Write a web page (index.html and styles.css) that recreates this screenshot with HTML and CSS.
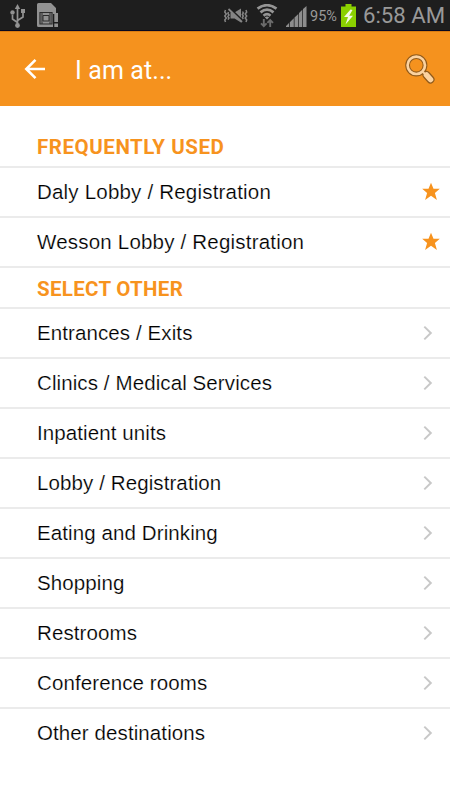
FILE: index.html
```html
<!DOCTYPE html>
<html lang="en">
<head>
<meta charset="utf-8">
<title>I am at...</title>
<link rel="stylesheet" href="styles.css">
</head>
<body>
<svg width="0" height="0" class="defs">
  <symbol id="star" viewBox="0 0 20 20"><path d="M10 .8l2.500 6h6.300l-4.900 4.100 2 7L10 13.800l-5.900 4.100 2-7L1.200 6.800h6.300z" fill="#f7931e"/></symbol>
  <symbol id="chevron" viewBox="0 0 10 16"><path d="M1.300 1.600 7.800 8l-6.500 6.400" fill="none" stroke="#c8c8c8" stroke-width="2"/></symbol>
</svg>
<div class="status">
  <svg class="usb" width="16" height="26" viewBox="0 0 16 26" fill="none" stroke="#929292" stroke-width="1.700">
    <path d="M7.500 4v19M7.500 19.500 2.500 16v-4M7.500 17.500 13 14v-4"/>
    <path d="M7.500 1 10.200 6H4.800z" fill="#929292" stroke="none"/>
    <circle cx="2.500" cy="9.500" r="2.200" fill="#929292" stroke="none"/>
    <path d="M11 6h4v4h-4z" fill="#929292" stroke="none"/>
    <circle cx="7.500" cy="22.500" r="2.400" fill="#929292" stroke="none"/>
  </svg>
  <svg class="sim" width="22" height="26" viewBox="0 0 22 26">
    <path d="M1.500 1H14l5 5v6h-3v13H1.500Q0 25 0 23.500v-21Q0 1 1.500 1z" fill="#929292"/>
    <path d="M3 10.500h12v11.500H3z" fill="none" stroke="#2c2c2c" stroke-width="1.200"/>
    <path d="M6 13.500h6v5.500H6zM5 11v11M13 11v11" fill="none" stroke="#2c2c2c" stroke-width="1"/>
    <path d="M17.300 11h3.700v9h-3.700zM17.300 21.500h3.700V25h-3.700z" fill="#929292"/>
  </svg>
  <span class="spacer"></span>
  <svg class="mute" width="24" height="18" viewBox="0 0 24 18" fill="none" stroke="#858585" stroke-width="1.500">
    <path d="M6.500 5.500h4L17 1.500v14l-6.500-4h-4z" fill="#858585" stroke="none"/>
    <path d="M6 2 19 14.500" stroke="#1e1e1e" stroke-width="2.500"/><path d="M4.500 2 18 15" stroke-width="1.800"/>
    <path d="M1.500 3 .8 5l1.500 2L.8 9l1.500 2-1.500 2 .7 2M4.500 5l-.6 1.500L5 8l-1.100 1.500L5 11l-1 1.700M18.500 4.500l.8 1.500-1 1.500 1 1.500-1 1.500 1 1.500M22 3l.7 2-1.500 2 1.500 2-1.500 2 1.500 2-.7 2"/>
  </svg>
  <svg class="wifi" width="22" height="24" viewBox="0 0 22 24" fill="none" stroke="#959595" stroke-width="2.700">
    <path d="M1.500 4.700q9.500-7 19 0M4.500 8.400q6.500-5.500 13 0M7.500 11.700q3.500-3 7 0"/>
    <path d="m11 15.500-2.200-2.300q2.200-1.600 4.400 0z" fill="#959595" stroke="none"/>
    <path d="M7.800 15v7M5 19.300l2.800 2.800 2.800-2.800M14.200 23v-7M11.400 18.800l2.800-2.800 2.800 2.800" stroke="#6c6c6c" stroke-width="1.900"/>
  </svg>
  <svg class="signal" width="21" height="21" viewBox="0 0 21 21" fill="#8d8d8d"><path d="M0 21v-1l3-3v4zM3.800 21v-4.800L7.800 12.200v8.800zM8.500 21v-9.500L12.300 7.900V21zM13 21V7l3.300-3.300v17.300zM17 21V3l3.500-3v21z"/></svg>
  <span class="pct">95%</span>
  <svg class="battery" width="15" height="23" viewBox="0 0 15 23"><path d="M4.500 0h6v2.500H15V23H0V2.500h4.500z" fill="#8ad000"/><path d="M9.500 5.500 3 13h4l-2.500 7.500L12 11.800H8.200L11.500 6z" fill="#f4fae5"/></svg>
  <span class="clock">6:58 AM</span>
</div>
<header class="bar">
  <svg class="back" width="22" height="22" viewBox="0 0 22 22" fill="none" stroke="#fff" stroke-width="2.600"><path d="M21 11H3M11.500 1.800 2.300 11l9.200 9.200"/></svg>
  <h1>I am at...</h1>
  <svg class="search" width="32" height="32" viewBox="0 0 32 32" fill="none">
    <path d="m18 18 3 3" stroke="#8f5a1c" stroke-width="4"/>
    <path d="m21.500 21 4 4.500" stroke="#8f5a1c" stroke-width="8" stroke-linecap="round"/>
    <path d="m21.500 21 4 4.500" stroke="#fbd2a0" stroke-width="5.600" stroke-linecap="round"/>
    <circle cx="11.300" cy="11.300" r="8.700" stroke="#8f5a1c" stroke-width="4.800"/>
    <circle cx="11.300" cy="11.300" r="8.700" stroke="#fbd2a0" stroke-width="2.700"/>
    <path d="m17.500 17.500 3 3" stroke="#fbd2a0" stroke-width="2"/>
  </svg>
</header>
<main>
  <h2 class="first">FREQUENTLY USED</h2>
  <ul class="frequent">
    <li><span>Daly Lobby / Registration</span><svg class="star"><use href="#star"/></svg></li>
    <li><span>Wesson Lobby / Registration</span><svg class="star"><use href="#star"/></svg></li>
  </ul>
  <h2>SELECT OTHER</h2>
  <ul>
    <li><span>Entrances / Exits</span><svg class="chev"><use href="#chevron"/></svg></li>
    <li><span>Clinics / Medical Services</span><svg class="chev"><use href="#chevron"/></svg></li>
    <li><span>Inpatient units</span><svg class="chev"><use href="#chevron"/></svg></li>
    <li><span>Lobby / Registration</span><svg class="chev"><use href="#chevron"/></svg></li>
    <li><span>Eating and Drinking</span><svg class="chev"><use href="#chevron"/></svg></li>
    <li><span>Shopping</span><svg class="chev"><use href="#chevron"/></svg></li>
    <li><span>Restrooms</span><svg class="chev"><use href="#chevron"/></svg></li>
    <li><span>Conference rooms</span><svg class="chev"><use href="#chevron"/></svg></li>
    <li><span>Other destinations</span><svg class="chev"><use href="#chevron"/></svg></li>
  </ul>
</main>
</body>
</html>
```
FILE: styles.css
```css
* { box-sizing: border-box; }
body { margin: 0; background: #fff; color: #000; font-family: "Liberation Sans", Arial, sans-serif; height: 800px; overflow: hidden; }
.defs { display: block; }
svg { flex: none; }
.status { display: flex; align-items: flex-start; height: 31px; background: #1e1e1e; border-bottom: 1px solid #080820; font-family: Roboto, sans-serif; color: #999; }
.usb { margin: 3px 0 0 10px; }
.sim { margin: 2px 0 0 11px; }
.spacer { flex: 1; }
.mute { margin: 7px 8px 0 0; }
.wifi { margin: 4px 8px 0 0; }
.signal { margin: 6px 3px 0 0; }
.pct { width: 30px; font-size: 14.5px; line-height: 33px; white-space: nowrap; }
.battery { margin: 4px 7px 0 1px; }
.clock { width: 87px; font-size: 22.2px; line-height: 31px; white-space: nowrap; }
.bar { display: flex; align-items: center; height: 75px; background: #f5921e; border-top: 1px solid #d97c12; color: #fff; }
.back { margin: 0 0 0 24px; }
.bar h1 { flex: 1; margin: 3px 0 0 29px; font: 400 25px/30px Roboto, sans-serif; letter-spacing: .1px; }
.search { margin: 2px 13px 0 0; }
h2 { margin: 0; height: 41px; padding: 2px 0 0 37px; border-bottom: 2px solid #ebebeb; font: 700 20.5px/38px Roboto, sans-serif; color: #f7931e; letter-spacing: .3px; }
h2.first { height: 62px; padding-top: 22px; letter-spacing: .55px; }
ul { list-style: none; margin: 0; padding: 0; }
li { display: flex; align-items: center; justify-content: space-between; height: 50px; padding-left: 37px; border-bottom: 2px solid #ebebeb; font-size: 20.5px; letter-spacing: .1px; }
li span { padding-bottom: 1px; -webkit-text-stroke: .2px #fff; }
.frequent li { letter-spacing: .2px; }
main ul:last-child li:last-child { border-bottom-color: transparent; }
.star { width: 20px; height: 20px; margin-right: 9px; }
.chev { width: 10px; height: 16px; margin-right: 17px; }
```
